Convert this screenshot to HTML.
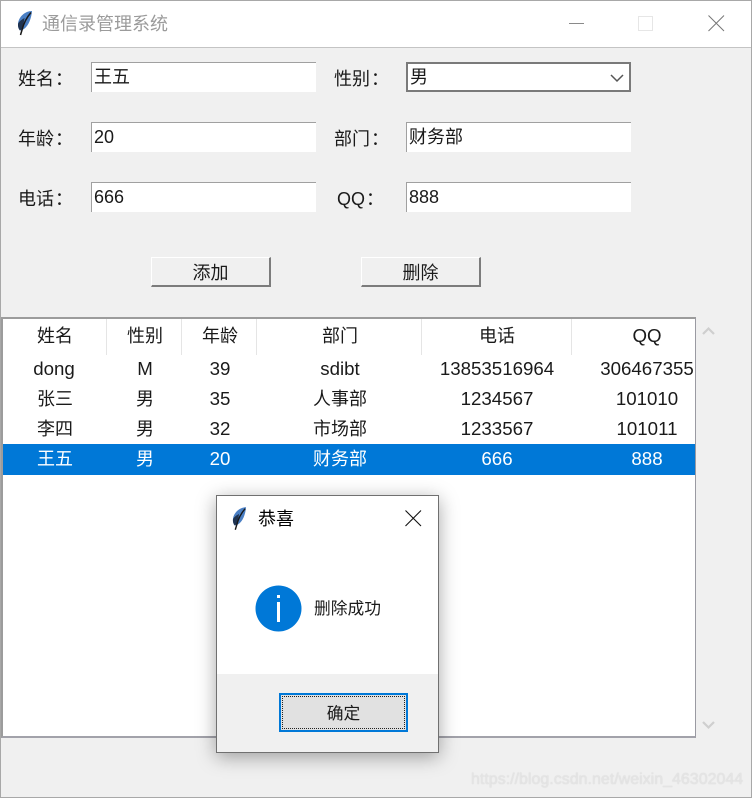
<!DOCTYPE html>
<html><head><meta charset="utf-8">
<style>
html,body{margin:0;padding:0;background:#f0f0f0}
#w{position:relative;width:752px;height:798px;overflow:hidden;background:#f0f0f0;font-family:"Liberation Sans","Noto Sans CJK SC",sans-serif;font-size:18px;color:#1a1a1a;line-height:30px;filter:blur(.35px)}
#w div{position:absolute;box-sizing:border-box;white-space:nowrap}
.l{height:30px}
.l span{position:relative;left:1px}
.e{width:225px;height:30px;background:#fff;border-top:1px solid #a0a0a0;border-left:1px solid #a0a0a0;padding-left:2px;line-height:28px}
.b{width:120px;height:30px;background:#f0f0f0;border-top:1px solid #fff;border-left:1px solid #fff;border-right:2px solid #7c7c7c;border-bottom:2px solid #7c7c7c;text-align:center;line-height:31px}
.sep{top:319px;width:1px;height:36px;background:#e5e5e5}
.c{transform:translateX(-50%);height:30px;line-height:32px}
.n{font-size:18.7px}
.s{color:#fff}
</style></head><body>
<div id="w">
<div style="left:0;top:0;width:752px;height:798px;border:1px solid #a8a8a8"></div>
<div style="left:1px;top:1px;width:750px;height:46px;background:#fff"></div>
<div style="left:1px;top:47px;width:750px;height:1px;background:#c4c4c4"></div>
<svg style="position:absolute;left:17px;top:10px" width="16" height="26" viewBox="0 0 16 26"><path d="M15 1C8 1 1.500 7 1 14c-.2 2.500.5 5 2 6.500C9 20 14 12 15 1z" fill="#4a7fc4"/><path d="M1 14c-.2 2.500.5 5 2 6.500L6 18 7.500 8C4 10 1.500 12 1 14z" fill="#1f3350"/><path d="M14 2.500C10 7 7 12 5 20L3.500 25" fill="none" stroke="#181818" stroke-width="1.500"/></svg>
<div style="left:42px;top:9px;color:#9b9b9b;height:30px">通信录管理系统</div>
<div style="left:569px;top:23px;width:15px;height:1px;background:#8a8a8a"></div>
<div style="left:638px;top:16px;width:15px;height:15px;border:1px solid #e6e6e6"></div>
<svg style="position:absolute;left:708px;top:15px" width="17" height="17"><path d="M.5 .5L16 16M16 .5L.5 16" stroke="#777" stroke-width="1" fill="none"/></svg>

<div class="l" style="left:18px;top:64px">姓名<span>：</span></div>
<div class="l" style="left:18px;top:124px">年龄<span>：</span></div>
<div class="l" style="left:18px;top:184px">电话<span>：</span></div>
<div class="l" style="left:334px;top:64px">性别<span>：</span></div>
<div class="l" style="left:334px;top:124px">部门<span>：</span></div>
<div class="l" style="left:337px;top:184px">QQ<span>：</span></div>

<div class="e" style="left:91px;top:62px">王五</div>
<div class="e" style="left:91px;top:122px">20</div>
<div class="e" style="left:91px;top:182px">666</div>
<div class="e" style="left:406px;top:62px;border:2px solid #7a7a7a;padding-left:2px;line-height:27px">男</div>
<svg style="position:absolute;left:610px;top:74px" width="14" height="9"><path d="M1 1L7 7L13 1" stroke="#555" stroke-width="1.500" fill="none"/></svg>
<div class="e" style="left:406px;top:122px">财务部</div>
<div class="e" style="left:406px;top:182px">888</div>

<div class="b" style="left:151px;top:257px">添加</div>
<div class="b" style="left:361px;top:257px">删除</div>

<div style="left:1px;top:317px;width:695px;height:421px;background:#fff;border-top:2px solid #9c9c9c;border-left:2px solid #9c9c9c;border-bottom:2px solid #a2a2aa;border-right:1px solid #9a9aa2"></div>
<div class="sep" style="left:106px"></div>
<div class="sep" style="left:181px"></div>
<div class="sep" style="left:256px"></div>
<div class="sep" style="left:421px"></div>
<div class="sep" style="left:571px"></div>
<div style="left:3px;top:444px;width:692px;height:31px;background:#0078d7"></div>

<div class="c" style="left:55px;top:320px">姓名</div><div class="c" style="left:145px;top:320px">性别</div><div class="c" style="left:220px;top:320px">年龄</div><div class="c" style="left:340px;top:320px">部门</div><div class="c" style="left:497px;top:320px">电话</div><div class="c n" style="left:647px;top:320px">QQ</div>

<div class="c n" style="left:54px;top:353px">dong</div><div class="c n" style="left:145px;top:353px">M</div><div class="c n" style="left:220px;top:353px">39</div><div class="c n" style="left:340px;top:353px">sdibt</div><div class="c n" style="left:497px;top:353px">13853516964</div><div class="c n" style="left:647px;top:353px">306467355</div>

<div class="c" style="left:55px;top:383px">张三</div><div class="c" style="left:145px;top:383px">男</div><div class="c n" style="left:220px;top:383px">35</div><div class="c" style="left:340px;top:383px">人事部</div><div class="c n" style="left:497px;top:383px">1234567</div><div class="c n" style="left:647px;top:383px">101010</div>

<div class="c" style="left:55px;top:413px">李四</div><div class="c" style="left:145px;top:413px">男</div><div class="c n" style="left:220px;top:413px">32</div><div class="c" style="left:340px;top:413px">市场部</div><div class="c n" style="left:497px;top:413px">1233567</div><div class="c n" style="left:647px;top:413px">101011</div>

<div class="c s" style="left:55px;top:443px">王五</div><div class="c s" style="left:145px;top:443px">男</div><div class="c n s" style="left:220px;top:443px">20</div><div class="c s" style="left:340px;top:443px">财务部</div><div class="c n s" style="left:497px;top:443px">666</div><div class="c n s" style="left:647px;top:443px">888</div>

<svg style="position:absolute;left:702px;top:326px" width="13" height="10"><path d="M1 8L6.500 2.500L12 8" stroke="#cfcfcf" stroke-width="2.200" fill="none"/></svg>
<svg style="position:absolute;left:702px;top:720px" width="13" height="10"><path d="M1 2L6.500 7.500L12 2" stroke="#cfcfcf" stroke-width="2.200" fill="none"/></svg>

<div style="left:471px;top:767px;height:26px;line-height:26px;font-size:16px;color:#e4e4e4;text-shadow:0 0 1px #d0d0d0">https://blog.csdn.net/weixin_46302044</div>

<div style="left:216px;top:495px;width:223px;height:258px;background:#fff;border:1px solid #707070;box-shadow:0 4px 18px rgba(0,0,0,.35)"></div>
<div style="left:217px;top:674px;width:221px;height:78px;background:#f0f0f0"></div>
<svg style="position:absolute;left:232px;top:506px" width="15" height="25" viewBox="0 0 16 26"><path d="M15 1C8 1 1.500 7 1 14c-.2 2.500.5 5 2 6.500C9 20 14 12 15 1z" fill="#4a7fc4"/><path d="M1 14c-.2 2.500.5 5 2 6.500L6 18 7.500 8C4 10 1.500 12 1 14z" fill="#1f3350"/><path d="M14 2.500C10 7 7 12 5 20L3.500 25" fill="none" stroke="#181818" stroke-width="1.500"/></svg>
<div style="left:258px;top:504px;height:30px;color:#000">恭喜</div>
<svg style="position:absolute;left:405px;top:510px" width="17" height="17"><path d="M.5 .5L16 16M16 .5L.5 16" stroke="#111" stroke-width="1.100" fill="none"/></svg>
<svg style="position:absolute;left:255px;top:585px" width="47" height="47"><circle cx="23.500" cy="23.500" r="23" fill="#0078d7"/><rect x="22" y="17" width="3" height="20" fill="#fff"/><rect x="22" y="10" width="3" height="3" fill="#fff"/></svg>
<div style="left:314px;top:594px;height:30px;font-size:16.750px">删除成功</div>
<div style="left:279px;top:693px;width:129px;height:39px;background:#e1e1e1;border:2px solid #0078d7"></div>
<div style="left:282px;top:696px;width:123px;height:33px;border:1px dotted #222"></div>
<div style="left:279px;top:699px;width:129px;height:30px;text-align:center;font-size:16.750px">确定</div>
</div>
</body></html>
